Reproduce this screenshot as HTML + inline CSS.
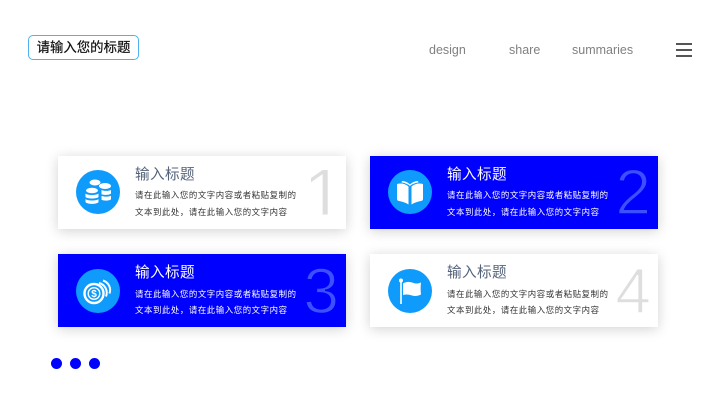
<!DOCTYPE html>
<html lang="zh">
<head>
<meta charset="utf-8">
<style>
html,body{margin:0;padding:0;background:#fff}
#p{position:relative;width:720px;height:405px;overflow:hidden;background:#fff;font-family:"Liberation Sans","Noto Sans CJK SC",sans-serif}
#p div{position:absolute}
.logo{left:28px;top:35px;width:109px;height:23px;border:1.5px solid #4fb2ee;border-radius:5px;font-size:13.4px;line-height:24px;text-align:center;color:#111;white-space:nowrap;-webkit-text-stroke:.2px #111}
.nav{top:42px;font-size:12.5px;line-height:16px;color:#808080;white-space:nowrap}
.bar{left:676px;width:16px;height:1.5px;background:#555}
.card{width:288px;height:73px;box-shadow:0 2px 12px rgba(0,0,0,.18);overflow:hidden}
.w{background:#fff}
.b{background:#0000ff}
.ic{left:18px;top:14.5px;width:44px;height:44px;border-radius:50%;background:#0f9bfb}
.ic svg{position:absolute;left:0;top:0}
.t{left:77px;top:9px;font-size:14.6px;letter-spacing:.4px;line-height:20px;white-space:nowrap}
.w .t{color:#54637a}
.b .t{color:#fff}
.l{left:77px;font-size:8.4px;letter-spacing:.6px;line-height:12px;white-space:nowrap}
.w .l{color:#333}
.b .l{color:#fff}
.l1{top:33.500px}
.l2{top:50px}
.n{font-size:64px;line-height:64px;top:4.500px;right:7px;-webkit-text-stroke:1.500px}
.w .n{color:#dedede;-webkit-text-stroke-color:#fff}
.b .n{color:#3d50ff;-webkit-text-stroke-color:#0000ff}
#p .one{font-size:75px;line-height:75px;top:2.700px;right:auto;left:245px;clip-path:inset(0 0 18.700px 0)}
.dot{top:358px;width:11px;height:11px;border-radius:50%;background:#0000ff}
</style>
</head>
<body>
<div id="p">
<div class="logo">请输入您的标题</div>
<div class="nav" style="left:429px">design</div>
<div class="nav" style="left:509px">share</div>
<div class="nav" style="left:572px">summaries</div>
<div class="bar" style="top:43px"></div>
<div class="bar" style="top:49px"></div>
<div class="bar" style="top:55px"></div>

<div class="card w" style="left:58px;top:155.5px">
<div class="ic"><svg width="44" height="44" viewBox="0 0 44 44" fill="#fff"><ellipse cx="19" cy="12.500" rx="5.500" ry="3"/><ellipse cx="29" cy="16" rx="6" ry="3"/><path d="M25.500 20c2 1.200 7.500 1.200 9.500 0v3.500c-1.500 1.700-7 1.700-9.500.7zM25.500 25.700c2 1.200 7.500 1.200 9.500 0v3.500c-1.500 1.700-7 1.700-9.500.7z"/><ellipse cx="16" cy="20.500" rx="6.500" ry="3.200" stroke="#0f9bfb" stroke-width="1"/><path d="M9.500 23.500c1.500 2 11.500 2 13 0v3.500c-1.500 2-11.500 2-13 0zM9.500 29c1.500 2 11.500 2 13 0v3c-1.500 2.500-11.500 2.500-13 0z"/></svg></div>
<div class="t">输入标题</div>
<div class="l l1">请在此输入您的文字内容或者粘贴复制的</div>
<div class="l l2">文本到此处，请在此输入您的文字内容</div>
<div class="n one">1</div>
</div>

<div class="card b" style="left:370px;top:155.5px">
<div class="ic"><svg width="44" height="44" viewBox="0 0 44 44" fill="#fff"><path d="M9 14c4-1 8-.5 11.500 2.500v18c-3-2-6.500-3-9.500-3.500-1.500-.3-2-1-2-2.500z"/><path d="M35 14c-4-1-8-.5-11.500 2.500v18c3-2 6.500-3 9.500-3.500 1.500-.3 2-1 2-2.500z"/><path d="M14 11c3 0 6 1.500 8 3.500 2-2 5-3.500 8-3.500l.5 1.500c-3 .3-6.500 1.500-8.500 3.500-2-2-5.500-3.200-8.500-3.500z"/></svg></div>
<div class="t">输入标题</div>
<div class="l l1">请在此输入您的文字内容或者粘贴复制的</div>
<div class="l l2">文本到此处，请在此输入您的文字内容</div>
<div class="n">2</div>
</div>

<div class="card b" style="left:58px;top:254px">
<div class="ic"><svg width="44" height="44" viewBox="0 0 44 44" fill="none" stroke="#fff"><circle cx="18" cy="24.500" r="9.500" stroke-width="2.400"/><circle cx="18" cy="24.500" r="5.800" stroke-width="1.400"/><path d="M23 14a10 10 0 0 1 7 13.500" stroke-width="2"/><path d="M27 11.500a10 10 0 0 1 6.500 13" stroke-width="2"/><text x="18" y="28" font-size="10" font-weight="bold" fill="#fff" stroke="none" text-anchor="middle" font-family="Liberation Sans">$</text></svg></div>
<div class="t">输入标题</div>
<div class="l l1">请在此输入您的文字内容或者粘贴复制的</div>
<div class="l l2">文本到此处，请在此输入您的文字内容</div>
<div class="n">3</div>
</div>

<div class="card w" style="left:370px;top:254px">
<div class="ic"><svg width="44" height="44" viewBox="0 0 44 44" fill="#fff"><circle cx="13" cy="11.500" r="2"/><rect x="12.200" y="12" width="1.600" height="23"/><path d="M15 14.500c4-2.500 7.500-1.500 10.500-.5 3 1 5 .5 7.500-.5-.5 4-.5 8 0 12-3 1.500-6 2-9 1-3-1-6-1.500-9-.5z"/></svg></div>
<div class="t">输入标题</div>
<div class="l l1">请在此输入您的文字内容或者粘贴复制的</div>
<div class="l l2">文本到此处，请在此输入您的文字内容</div>
<div class="n">4</div>
</div>

<div class="dot" style="left:51px"></div>
<div class="dot" style="left:70px"></div>
<div class="dot" style="left:89px"></div>
</div>
</body>
</html>
